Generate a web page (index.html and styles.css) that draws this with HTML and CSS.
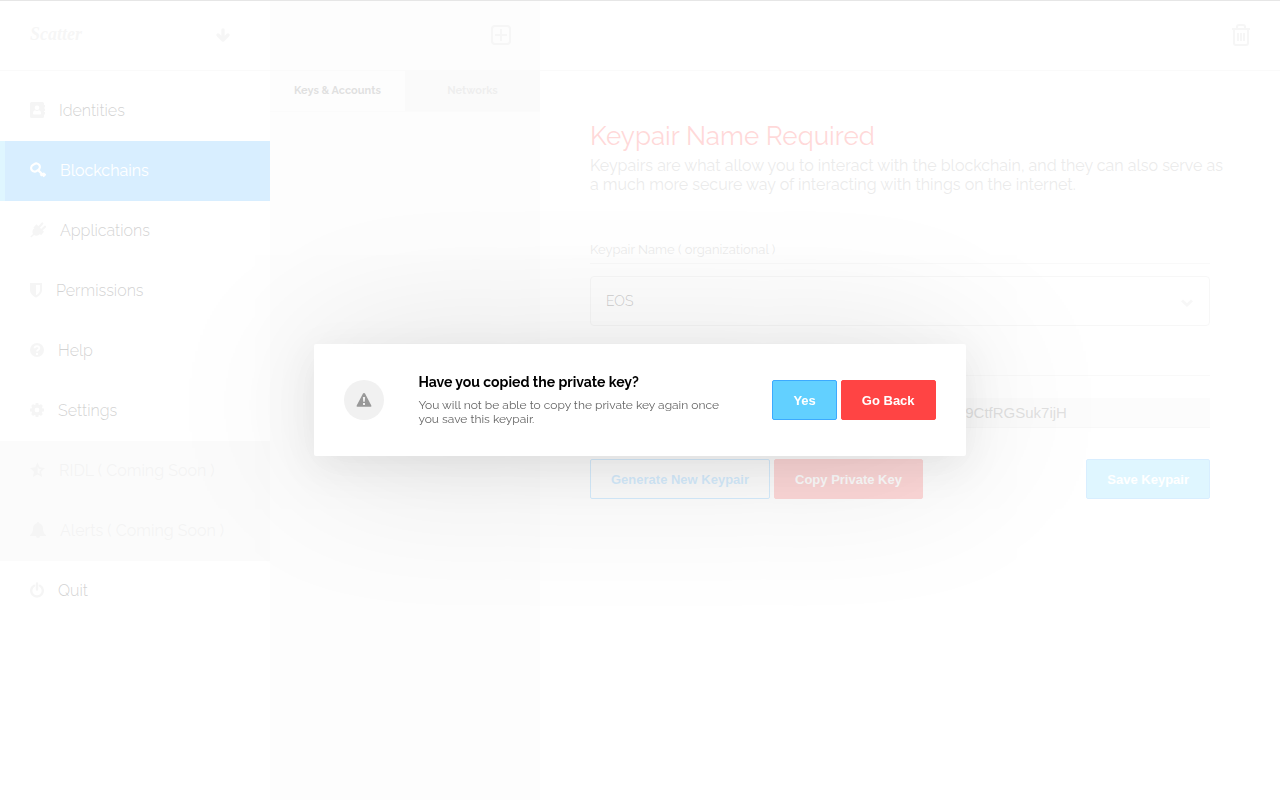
FILE: index.html
```
<!DOCTYPE html>
<html lang="en">
<head>
<meta charset="utf-8">
<meta name="viewport" content="width=device-width, initial-scale=1">
<title>Scatter</title>
<link rel="stylesheet" href="styles.css">
</head>
<body>

<div class="app">
  <aside class="sidebar">
    <header class="top-bar">
      <span class="logo">Scatter</span>
      <button class="icon-btn" aria-label="Collapse menu">
        <svg width="16" height="16" viewBox="0 0 16 16"><path d="M8 3v9M3 8l5 5 5-5" fill="none" stroke="currentColor" stroke-width="3.400" stroke-linecap="round" stroke-linejoin="round"/></svg>
      </button>
    </header>
    <nav class="menu">
      <a href="#">
        <svg width="15" height="16" viewBox="0 0 15 16"><path fill-rule="evenodd" d="M1.500 0h11Q14 0 14 1.500V3h1v2.500h-1v1h1V9h-1v1h1v2.500h-1v2q0 1.500-1.500 1.500h-11Q0 16 0 14.500v-13Q0 0 1.500 0zM7 3.500a2.300 2.300 0 1 0 0 4.600 2.300 2.300 0 0 0 0-4.600zM5 8.300c-1.300.3-2 1.500-2 3.200q0 1 1 1h6q1 0 1-1c0-1.700-.7-2.900-2-3.200q-2 1.500-4 0z"/></svg>
        <span>Identities</span>
      </a>
      <a href="#" class="active">
        <svg width="16" height="16" viewBox="0 0 16 16"><g fill="none" stroke="currentColor"><rect x="1" y="2" width="9" height="7" rx="3.500" stroke-width="2.200" transform="rotate(-35 5.500 5.500)"/><path d="M8 8l6.500 6.500M10.500 13.700l2-2M13 11.200l2.500 2.300" stroke-width="2.400"/></g></svg>
        <span>Blockchains</span>
      </a>
      <a href="#">
        <svg width="16" height="16" viewBox="0 0 16 16"><path d="M4.500 6l5.800 5.800c-2 2.300-4.500 2.200-6.300 1.200L1.400 15.600.3 14.500 3 11.900C2 10 2.300 7.700 4.500 6z"/><path d="M5 5.500l6 6 1.500-1.800-6-5.900zM8.500 5.700L12.300 1.500M11 8.500l4-3.800" stroke="currentColor" stroke-width="2.200" stroke-linecap="round"/></svg>
        <span>Applications</span>
      </a>
      <a href="#">
        <svg width="12" height="16" viewBox="0 0 12 16"><path fill-rule="evenodd" d="M0 1h12v7c0 3.500-3 6-6 7.500C3 14 0 11.500 0 8zm6 2v10.300C8.500 12 10 10 10 8V3z"/></svg>
        <span>Permissions</span>
      </a>
      <a href="#">
        <svg width="14" height="16" viewBox="0 0 14 16"><circle cx="7" cy="8" r="7"/><path d="M4.600 6.200C4.700 3.500 9.500 3.600 9.300 6.300 9.200 8 7 7.700 7 9.600M7 11v2" fill="none" stroke="#fff" stroke-width="1.900"/></svg>
        <span>Help</span>
      </a>
      <a href="#">
        <svg width="14" height="16" viewBox="0 0 14 16"><circle cx="7" cy="8" r="4" fill="none" stroke="currentColor" stroke-width="3.400"/><path d="M7 1v3M7 12v3M0 8h3M11 8h3M2.100 3.100l2 2M9.900 10.900l2 2M2.100 12.900l2-2M9.900 5.100l2-2" stroke="currentColor" stroke-width="2.800"/><circle cx="7" cy="8" r="2.200" fill="#fff"/></svg>
        <span>Settings</span>
      </a>
      <a href="#" class="disabled">
        <svg width="15" height="16" viewBox="0 0 15 16"><path fill-rule="evenodd" d="M7.500.5L9.700 5.200 15 5.900 11.100 9.700 12.100 15 7.500 12.500 2.900 15 3.900 9.700 0 5.900 5.300 5.200zM7.700 4.500V10.900L9.700 12 9.400 9 11.400 7.200 8.700 6.700z"/></svg>
        <span>RIDL ( Coming Soon )</span>
      </a>
      <a href="#" class="disabled">
        <svg width="16" height="16" viewBox="0 0 16 16"><path d="M8 0c.8 0 1.200.6 1.100 1.200C12 1.800 13 4 13 6.500c0 3 .8 4.700 3 6.500v1h-6c0 2.600-4 2.600-4 0H0v-1c2.200-1.800 3-3.500 3-6.500 0-2.500 1-4.700 3.900-5.300C6.800.6 7.200 0 8 0z"/></svg>
        <span>Alerts ( Coming Soon )</span>
      </a>
      <a href="#">
        <svg width="14" height="16" viewBox="0 0 14 16"><path d="M4 3.700a5.800 5.800 0 1 0 6 0M7 1.500v6" fill="none" stroke="currentColor" stroke-width="2.400" stroke-linecap="round"/></svg>
        <span>Quit</span>
      </a>
    </nav>
  </aside>

  <section class="list">
    <header class="top-bar">
      <button class="icon-btn push" aria-label="Add keypair">
        <svg width="20" height="20" viewBox="0 0 20 20"><path d="M4 1h12q3 0 3 3v12q0 3-3 3H4q-3 0-3-3V4q0-3 3-3zM10 4v12M4 10h12" fill="none" stroke="currentColor" stroke-width="2"/></svg>
      </button>
    </header>
    <div class="tabs">
      <button class="tab selected">Keys &amp; Accounts</button>
      <button class="tab">Networks</button>
    </div>
  </section>

  <main class="detail">
    <header class="top-bar">
      <button class="icon-btn push" aria-label="Delete keypair">
        <svg width="20" height="22" viewBox="0 0 20 22"><path d="M1 5h18M3 5v14q0 2 2 2h10q2 0 2-2V5M6 5V3q0-2 2-2h4q2 0 2 2v2M7 9v8M10 9v8M13 9v8" fill="none" stroke="currentColor" stroke-width="2"/></svg>
      </button>
    </header>
    <div class="content">
      <h1>Keypair Name Required</h1>
      <p class="intro">Keypairs are what allow you to interact with the blockchain, and they can also serve as a much more secure way of interacting with things on the internet.</p>

      <form class="keypair">
        <label for="name">Keypair Name ( organizational )</label>
        <div class="select">
          <select id="name">
            <option>EOS</option>
          </select>
          <svg width="12" height="8" viewBox="0 0 12 8"><path d="M1 1.500l5 4.500 5-4.500" fill="none" stroke="currentColor" stroke-width="3"/></svg>
        </div>

        <label for="key">Private Key</label>
        <input type="text" id="key" value="5Kexamp1eKeypairNotARea1Va1ueForDemoWa11et09CtfRGSuk7ijH">

        <div class="actions">
          <button type="button" class="btn outline">Generate New Keypair</button>
          <button type="button" class="btn red">Copy Private Key</button>
          <button type="button" class="btn blue push">Save Keypair</button>
        </div>
      </form>
    </div>
  </main>
</div>

<div class="overlay">
  <div class="dialog" role="dialog" aria-labelledby="dialog-title">
    <div class="badge">
      <svg width="16" height="14" viewBox="0 0 16 14"><path fill-rule="evenodd" d="M8 0q.7 0 1 .6l6.300 11.800q.6 1.300-.8 1.300h-13q-1.400 0-.8-1.300L7 .6Q7.300 0 8 0zM6.900 4l.3 4.800h1.600L9.100 4zM7 10v2h2v-2z"/></svg>
    </div>
    <div class="message">
      <h2 id="dialog-title">Have you copied the private key?</h2>
      <p>You will not be able to copy the private key again once you save this keypair.</p>
    </div>
    <div class="choices">
      <button class="btn blue">Yes</button>
      <button class="btn red">Go Back</button>
    </div>
  </div>
</div>

</body>
</html>
```
FILE: styles.css
```
* {
  box-sizing: border-box;
}

body {
  margin: 0;
  font-family: Raleway, Lato, sans-serif;
  font-size: 16px;
  color: #000;
  background: #fff;
}

button, input, select {
  font-family: Arial, "Liberation Sans", sans-serif;
}

svg {
  display: block;
  fill: currentColor;
  flex: none;
}

.app {
  display: grid;
  grid-template-columns: 270px 270px 1fr;
  min-height: 100vh;
  border-top: 1px solid #828282;
}

.top-bar {
  display: flex;
  align-items: center;
  height: 70px;
  padding: 0 29px 2px 30px;
  border-bottom: 1px solid #e6e6e6;
  color: #d0d0d0;
}

.icon-btn {
  padding: 0;
  border: none;
  background: none;
  color: #d0d0d0;
  cursor: pointer;
}

.push {
  margin-left: auto;
}

/* Sidebar */
.logo {
  font-family: cursive, "Liberation Serif", serif;
  font-size: 18px;
  font-style: italic;
  font-weight: bold;
}

.sidebar .top-bar {
  justify-content: space-between;
  padding-right: 39px;
}

.menu {
  padding-top: 10px;
}

.menu a {
  display: flex;
  align-items: center;
  gap: 14px;
  height: 60px;
  padding: 0 0 2px 30px;
  color: #222;
  font-weight: 300;
  font-size: 16px;
  text-decoration: none;
}

.menu svg {
  color: #ccc;
}

.menu .active {
  padding-left: 25px;
  border-left: 5px solid #62d0ff;
  background: #3caaff;
  color: #fff;
  font-weight: 400;
}

.menu .active svg {
  color: #fff;
}

.menu .disabled {
  background: #ebebeb;
  color: #c3c3c3;
  font-weight: 400;
}

/* Middle column */
.list {
  background: #f3f3f3;
}

.tabs {
  display: flex;
  height: 41px;
  border-bottom: 1px solid #e9e9e9;
}

.tab {
  flex: 1;
  padding: 0 0 2px;
  border: none;
  background: #e6e6e6;
  color: #aaa;
  font-family: Raleway, Lato, sans-serif;
  font-size: 11px;
  font-weight: bold;
}

.tab.selected {
  background: #f3f3f3;
  color: #666;
}

/* Keypair form */
.content {
  padding: 50px;
}

h1 {
  margin: 0;
  color: #ff4444;
  font-size: 26px;
  font-weight: 400;
  line-height: 30px;
}

.intro {
  margin: 5px 0 0;
  color: #999;
  font-size: 16px;
  line-height: 19px;
}

.keypair {
  padding: 48px 20px 0 0;
}

.keypair label {
  display: block;
  height: 22px;
  border-bottom: 1px solid #e2e2e2;
  color: #999;
  font-size: 13px;
  line-height: 16px;
}

.select {
  display: flex;
  align-items: center;
  margin: 12px 0 28px;
  color: #d8d8d8;
}

.select select {
  flex: 1;
  height: 50px;
  padding: 0 15px;
  border: 1px solid #d4d4d4;
  border-radius: 4px;
  background: none;
  color: #000;
  font-family: Raleway, Lato, sans-serif;
  font-size: 14px;
  font-weight: 300;
  appearance: none;
}

.select svg {
  margin: 4px 17px 0 -29px;
}

.keypair input {
  width: 100%;
  height: 30px;
  margin-top: 22px;
  padding: 0 12px;
  border: none;
  border-bottom: 1px solid #ddd;
  background: #f0f0f0;
  color: #666;
  font-size: 15px;
}

.actions {
  display: flex;
  gap: 4px;
  margin-top: 31px;
}

.btn {
  height: 40px;
  padding: 0 20px;
  border: 1px solid;
  border-radius: 2px;
  font-size: 13px;
  font-weight: bold;
  cursor: pointer;
}

.btn.blue {
  border-color: #3caaff;
  background: #62d0ff;
  color: #fff;
}

.btn.red {
  border-color: #ff4444;
  background: #ff4444;
  color: #fff;
}

.btn.outline {
  border-color: #3caaff;
  background: #fff;
  color: #3caaff;
}

/* Popup */
.overlay {
  position: fixed;
  inset: 0;
  display: flex;
  align-items: center;
  justify-content: center;
  background: rgba(255, 255, 255, 0.8);
}

.dialog {
  display: flex;
  align-items: center;
  padding: 28px 30px;
  border-radius: 2px;
  background: #fff;
  box-shadow: 0 10px 40px rgba(0, 0, 0, 0.08), 0 5px 160px rgba(0, 0, 0, 0.13);
}

.badge {
  display: flex;
  align-items: center;
  justify-content: center;
  width: 40px;
  height: 40px;
  border-radius: 50%;
  background: #f1f1f1;
  color: #999;
}

.message {
  width: 354px;
  padding: 0 40px 2px 0;
  margin-left: 34px;
}

.message h2 {
  margin: 0;
  font-size: 14px;
  font-weight: bold;
  line-height: 20px;
}

.message p {
  margin: 6px 0 0;
  color: #666;
  font-size: 12px;
  line-height: 14px;
}

.choices {
  display: flex;
  gap: 4px;
}
```
